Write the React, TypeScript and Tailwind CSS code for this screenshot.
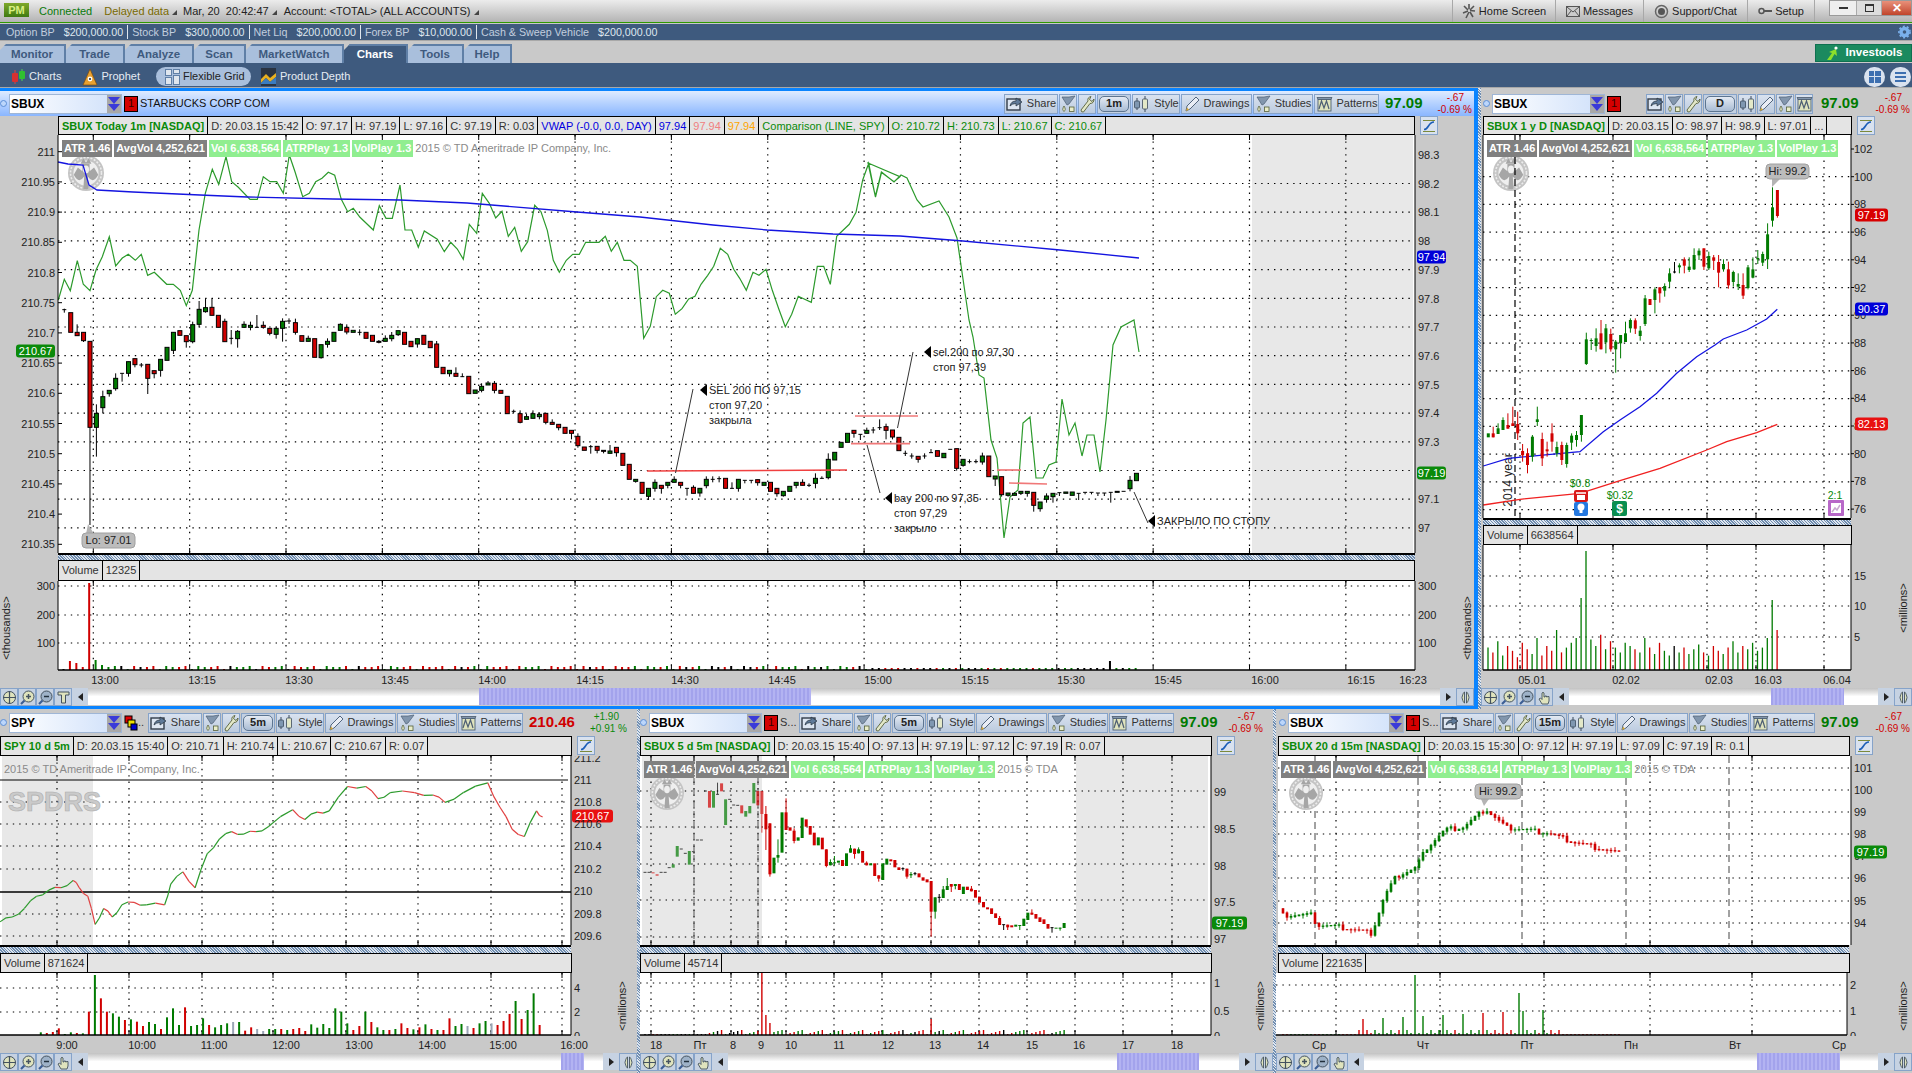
import React from 'react';

type Candle = [number, number, number, number?, number?]; // colour (1 up, 0 down, 2 doji), body top, body bottom, high, low

const UP = '#007a00';
const DOWN = '#d00000';
const K = 1.2194; // overview px to page px

const conv = (off: number) => (r: number[]): Candle => [r[0], off + r[1] / 3, off + r[2] / 3, r[3] !== undefined ? off + r[3] / 3 : undefined, r[4] !== undefined ? off + r[4] / 3 : undefined];

// main chart candles, read from the picture in three chunks
const mainA = [[2,539,541,536,548],[0,548,607],[0,607,617,583],[0,607,632,607,636],[0,634,892,634,1185],[1,850,892,823,980],[1,800,833,782,850],[1,781,791,781,800],[1,745,776,730,782],[2,730,731,730,755],[1,695,730,695,740],[0,686,704,686,712],[2,705,706,699,712],[0,703,745,703,792],[0,722,731,722,745],[1,688,721,688,740],[1,652,691],[1,607,661,607,672],[0,602,616],[0,617,635,617,653],[1,584,635,575,640],[1,538,583,513,592],[1,533,545,505,548],[0,532,556,505],[0,556,592],[0,574,635,566],[2,625,626,600,643],[1,604,626,600,653],[1,583,592,574],[1,586,592,575,601],[2,592,593,555],[0,586,592,574,596],[0,595,610,595,616],[1,595,613,590,626],[1,574,595,565,635],[2,573,574,565,582],[0,578,607,566,614],[0,617,634],[1,625,634,617],[0,626,682],[1,644,683,644,686],[1,634,643,625,653],[1,607,634],[1,583,601,580],[0,592,606,583,613],[1,601,607],[2,607,608,598,616],[0,607,625],[0,616,634],[0,634,637,630,640],[1,625,634,616],[1,616,626,606,634],[1,602,614,602,618]];
const mainB = [[0,592,628],[0,619,635],[1,611,627,611,638],[0,601,628],[0,619,638],[0,627,697,618],[0,697,716],[1,706,716,706,725],[0,715,724,697],[2,725,726,715],[0,724,776],[1,765,775],[1,754,766,745,772],[1,744,750,738],[0,745,766,738,775],[0,766,775],[0,784,836],[2,829,830,824,834],[0,836,862,826,865],[1,845,853,836],[1,836,850,826],[1,838,845,832,853],[0,835,862,835,868],[0,862,868,853],[0,868,878,868,886],[0,877,895],[0,886,895,886,913],[0,904,932,895,938],[0,936,946],[2,935,936,930,956],[0,934,946,934,955],[0,946,949,946,955],[1,948,955,930],[0,937,953,937,965],[0,955,991],[0,988,1033],[1,1033,1039,1033,1043],[0,1042,1075],[1,1060,1084,1060,1095],[1,1042,1060,1033,1070],[0,1051,1060,1051,1076],[1,1042,1051,1042,1060],[1,1033,1042,1024],[0,1042,1051,1042,1060],[2,1060,1061,1060,1082],[0,1057,1075,1051],[1,1060,1074,1060,1085],[1,1033,1052,1024,1060],[2,1033,1034,1024,1042],[2,1031,1032,1024,1042],[0,1030,1060],[2,1060,1061,1042],[1,1033,1060,1033,1070],[2,1036,1037,1036,1045],[2,1036,1037,1036,1045],[0,1034,1043,1034,1052],[1,1042,1051],[0,1042,1069],[0,1060,1076,1060,1085],[1,1069,1082,1069,1085],[1,1054,1069],[1,1042,1051,1042,1060],[0,1042,1051,1033],[2,1051,1052,1045,1056],[1,1030,1045,1015,1060],[2,1030,1031,1024],[1,973,1028,955,1033],[1,952,975],[1,922,937],[1,895,922],[0,886,895,886,908],[2,898,899,898,915],[1,886,895,878],[2,885,886,876,895],[2,878,879,853,885],[0,875,886,866,913],[0,885,906,885,913]];
const mainC = [[0,352,392],[2,400,401,392,408],[2,408,409,400,416],[0,409,418,409,428],[2,408,409,400,416],[2,398,399,387],[0,392,409],[1,400,413],[2,388,389],[0,386,445,386,452],[1,418,436,418,440],[2,425,426,418,430],[2,425,426,418,430],[1,408,426,398,434],[0,408,470],[1,468,477,468,498],[0,470,524,470,530],[1,519,526,519,530],[1,520,526,517],[1,514,520,514,525],[1,514,520,514,530],[0,517,556,517,575],[1,546,566,546,575],[1,528,538,520,548],[1,520,530,520,548],[2,518,519,518,528],[1,516,520],[1,516,526],[2,520,521,520,540],[2,517,518,517,523],[2,517,518,517,523],[2,519,520,519,528],[2,519,520,519,528],[2,517,518,517,548],[1,514,516],[2,514,515],[1,481,506,468,514],[1,460,482]];
const mainCandles: Candle[] = [...mainA.map(conv(130)), ...mainB.map(conv(135)), ...mainC.map(conv(320))];

const rightCandles: Candle[] = [[1,880,892],[0,880,892,860],[1,865,882,850],[1,840,870,832],[0,855,866,820],[0,850,858,800],[0,852,880,815,900],[0,933,946,912,965],[0,940,975,925,1000],[1,890,950,885,965],[1,838,846,800,858],[0,897,955,878,978],[0,928,934,905,950],[0,880,905,850,935],[1,921,940,905,950],[0,915,960,905,975],[1,915,972,908,983],[1,887,908,880,930],[1,885,900,873,920],[1,825,885,825,905],[1,598,672,578,675],[1,600,602,595,630],[1,595,618,565,635],[0,580,628,540],[1,565,607,552,640],[0,582,628,566,635],[1,605,628,600,698],[1,585,610,585,655],[1,580,606,545],[1,540,565,535,578],[0,541,566,535,582],[1,572,588,558,602],[1,475,552,465,558],[0,477,495],[1,448,480,442,520],[0,442,460,442,488],[1,438,452,430,470],[1,400,425,385,443],[2,396,397,366,400],[1,376,382,370,400],[0,358,377,352,400],[1,380,390,352,396],[1,345,388,325,390],[1,332,346,325,360],[0,325,380,325,390],[1,348,385,335,390],[0,352,362,345,390],[0,366,398,345,442],[1,372,388,358,395],[0,388,436,365,446],[1,396,426,392,440],[1,432,440,400,450],[0,435,467,400,477],[1,382,444,375,448],[1,388,413,352,415],[1,354,358,330,372],[1,342,368,335,378],[1,283,358,250,387],[1,202,242,142,260],[0,150,228,150,233]].map(conv(140));

const sbux5Candles: Candle[] = [[2,337,338],[2,337,338],[0,337,339],[0,343,347],[2,337,338],[2,337,338],[2,323,324],[1,313,323],[1,258,290],[2,267,268],[2,280,281],[1,273,314],[2,275,276],[2,240,241],[2,240,241],[2,93,94],[0,93,143],[1,93,143],[2,103,104,68],[0,70,94],[1,118,195],[2,118,119],[2,135,136],[2,136,137],[0,136,160],[1,153,170],[1,138,160],[1,69,130],[0,93,136],[0,93,162,93,218],[0,162,208,138,270],[0,190,343,190,350],[1,293,340],[1,285,293,238,308],[1,157,278],[0,157,210,115],[0,202,212],[0,212,243,205,250],[1,232,242],[1,173,234],[0,178,200],[0,198,224],[0,218,256],[1,232,256],[0,233,268],[0,268,318,268,322],[1,306,316,298],[1,307,309,288,316],[1,302,308],[0,300,318],[1,280,318],[1,265,278,255],[0,266,282,266,296],[1,268,280,262],[0,273,308],[0,308,316,304],[1,310,316],[0,310,348],[0,346,356,346,365],[1,310,360],[1,296,314],[0,298,304],[0,300,322],[0,322,330],[2,326,327,322,332],[0,326,350,326,356],[1,342,346,336,354],[2,341,342,336,346],[0,340,352],[0,352,362],[0,358,367],[0,363,455,363,530],[1,412,455,412,476],[2,412,413,402,428],[1,388,414,378],[1,378,390,354],[0,372,380,372,396],[1,372,378,372,388],[0,372,390],[1,380,402],[0,380,390],[0,386,394,378],[0,390,413],[0,410,428],[0,426,442],[0,442,448],[0,445,462],[0,460,474],[0,474,495,468],[2,494,495,494,510],[0,494,502,494,510],[0,496,502],[1,494,500],[1,495,497,495,510],[1,476,498],[1,458,480],[0,458,464,448],[0,462,476],[0,472,486],[0,478,492],[0,492,506],[2,503,504,503,518],[1,503,506],[1,503,506,503,512],[1,489,504]].map(conv(760));

// 20 day chart: coarse path from the picture, the bars follow it
const sbux20Path: [number, number][] = [[1050,750],[1075,750],[1080,758],[1100,760],[1125,765],[1135,735],[1145,718],[1160,712],[1170,695],[1185,680],[1200,678],[1218,663],[1235,678],[1250,680],[1270,683],[1290,690],[1310,695],[1330,700]];
const pathY = (p: [number, number][], x: number) => {
  for (let i = 1; i < p.length; i++) if (x <= p[i][0]) return p[i - 1][1] + ((p[i][1] - p[i - 1][1]) * (x - p[i - 1][0])) / (p[i][0] - p[i - 1][0]);
  return p[p.length - 1][1];
};
const sbux20Candles: Candle[] = Array.from({ length: 85 }, (_, i) => {
  const x = 1052 + i * 3.28;
  const prev = pathY(sbux20Path, x - 3.28) * K + (((i - 1) * 13) % 7 - 3) * 0.7;
  const cur = pathY(sbux20Path, x) * K + ((i * 13) % 7 - 3) * 0.7;
  const t = Math.min(prev, cur);
  const b = Math.max(prev, cur) + 1;
  return [cur < prev ? 1 : 0, t, b, t - (i * 5) % 4, b + (i * 3) % 4] as Candle;
});

const comparison: [number, number][] = [
  ...[[175,510],[193,448],[211,482],[232,392],[250,463],[270,482],[288,420],[307,380],[328,320],[347,408],[367,384],[385,373],[406,391],[424,373],[443,436],[463,427],[500,463],[520,463],[541,481],[559,527],[577,481],[597,300],[616,190],[637,118],[656,163],[678,80],[695,155],[715,172],[750,208],[772,208],[790,140],[810,155],[830,155],[850,190],[868,75],[885,125],[908,200],[928,190],[947,155],[966,145],[985,127],[1004,136],[1024,208],[1043,245],[1060,235],[1080,262],[1120,300],[1138,227],[1158,265],[1177,265]].map(([x, y]) => [x / 3, 130 + y / 3] as [number, number]),
  ...[[0,150],[15,285],[35,285],[55,337],[73,288],[112,313],[133,350],[152,322],[172,342],[190,373],[208,268],[230,295],[247,175],[268,205],[287,249],[306,229],[325,304],[344,277],[364,349],[383,320],[404,211],[423,230],[442,286],[460,376],[478,412],[499,376],[518,358],[538,358],[557,322],[597,322],[616,304],[634,349],[652,322],[672,376],[691,376],[712,394],[731,610],[751,574],[769,485],[788,466],[808,475],[826,538],[846,521],[866,492],[885,484],[903,448],[923,421],[941,394],[961,340],[983,358],[1001,403],[1019,430],[1039,466],[1059,412],[1077,421],[1098,403],[1117,466],[1136,521],[1156,575],[1175,538],[1195,484],[1234,502],[1252,394],[1271,394],[1291,448],[1310,304],[1330,285],[1348,268],[1368,232],[1388,135],[1406,85],[1426,184],[1444,112],[1482,140],[1500,125]].map(([x, y]) => [400 + x / 3, 135 + y / 3] as [number, number]),
  [868,163],[875.5,197],[881.6,172],[894,182],[901,175],[907,178],[917,200],[923,207],[939,201],[949,217],[957,238],[969,320],[973,337],[979,375],[984,378],[991,440],[997,458],[1004,538],[1010,497],[1018,490],[1023,423],[1030,417],[1036,478],[1043,478],[1049,465],[1056,462],[1062,399],[1069,435],[1075,423],[1082,456],[1087,435],[1094,435],[1100,472],[1106,420],[1113,345],[1121,327],[1134,320],[1139,352],
];
const vwap: [number, number][] = [[58,162],[68,164],[83,165],[89,185],[97,190],[133,192],[200,195],[247,197],[333,199],[400,200],[467,203],[577,212],[640,217],[713,225],[767,230],[833,234],[900,236],[963,241],[1060,250],[1139,258]];
const spyBase: [number, number][] = [[0,756],[10,752],[20,745],[30,735],[40,730],[50,728],[60,722],[65,728],[72,735],[78,758],[85,745],[92,752],[100,742],[110,740],[120,742],[135,742],[140,725],[150,715],[160,728],[170,700],[180,688],[190,682],[200,684],[210,682],[220,678],[240,664],[250,672],[260,666],[270,665],[285,645],[300,645],[310,655],[320,650],[340,650],[355,652],[365,658],[380,650],[400,642],[410,662],[420,680],[430,686],[440,665],[445,670]];
// the real line wiggles between those points
const spyLine: [number, number][] = spyBase.flatMap(([x, y], i): [number, number][] => {
  const next = spyBase[i + 1];
  const first: [number, number] = [x * K, y * K];
  if (!next) return [first];
  return [first, [((x + next[0]) / 2) * K, ((y + next[1]) / 2) * K + (i % 2 ? 1.6 : -1.6)]];
});

const spyVol: [number, number][] = [[1,217],[0,219],[0,216],[0,205],[1,222],[1,217],[0,219],[1,220],[0,155],[1,45],[0,115],[0,155],[1,160],[1,170],[0,180],[1,178],[0,185],[0,198],[1,186],[1,192],[0,207],[1,172],[1,145],[1,195],[0,142],[1,198],[1,195],[1,175],[0,195],[1,202],[1,195],[1,190],[3,186],[1,186],[0,212],[0,202],[3,207],[3,213],[1,207],[1,207],[0,207],[1,210],[0,207],[0,204],[0,213],[1,193],[1,203],[1,192],[1,204],[1,145],[1,155],[1,190],[0,210],[0,198],[1,155],[0,186],[1,202],[1,210],[0,210],[1,207],[0,190],[0,204],[1,208],[0,202],[1,193],[0,207],[1,210],[0,210],[0,175],[1,198],[1,192],[3,198],[0,204],[1,190],[1,183],[3,190],[0,195],[0,183],[0,162],[1,123],[0,177],[1,150],[1,100],[0,195]];
const rightVol = [28,22,36,18,30,24,16,34,26,20,40,18,30,24,50,22,28,34,40,72,119,38,30,44,26,36,28,22,34,30,26,22,40,28,20,34,24,18,30,22,28,20,26,32,22,18,30,24,20,28,36,22,30,26,34,24,28,40,70,50];

const tone = (c: number) => (c === 1 ? UP : c === 0 ? DOWN : c === 3 ? '#9aa5b5' : '#000000');
const poly = (p: [number, number][]) => p.map(([x, y]) => `${x.toFixed(1)},${y.toFixed(1)}`).join(' ');

const Candles = ({ data, x0, step, w, outlined, fadeUntil }: { data: Candle[]; x0: number; step: number; w: number; outlined?: boolean; fadeUntil?: number }) => (
  <g>
    {data.map((c, i) => {
      const x = x0 + i * step;
      const [col, top, bot, hi, lo] = c;
      const fill = tone(col);
      const wick = outlined || col === 2 ? '#000000' : fill;
      const o = fadeUntil !== undefined && x < fadeUntil ? 0.7 : 1;
      const doji = col === 2;
      return (
        <g key={i} opacity={o}>
          {(hi !== undefined || lo !== undefined) && <line x1={x} x2={x} y1={hi ?? top} y2={lo ?? bot} stroke={wick} strokeWidth={1} />}
          {doji ? (
            <line x1={x - w / 2} x2={x + w / 2} y1={top} y2={top} stroke="#000000" strokeWidth={1} />
          ) : (
            <rect x={x - w / 2} y={top} width={w} height={Math.max(bot - top, 1)} fill={fill} stroke={outlined ? '#000000' : 'none'} strokeWidth={outlined ? 1 : 0} />
          )}
        </g>
      );
    })}
  </g>
);

const Grid = ({ ys, xs, x1, x2, y1, y2, solid }: { ys: number[]; xs: number[]; x1: number; x2: number; y1: number; y2: number; solid?: number[] }) => (
  <g stroke="#000000">
    {ys.map((y) => (
      <line key={y} x1={x1} x2={x2} y1={y} y2={y} strokeWidth={1.2} strokeDasharray="1.4 5" />
    ))}
    {xs.map((x) => (
      <g key={x}>
        <line x1={x} x2={x} y1={y1} y2={y2} strokeWidth={1.2} strokeDasharray="1.4 5" />
        <line x1={x} x2={x} y1={y1} y2={y1 + 5} strokeWidth={1} />
        <line x1={x} x2={x} y1={y2 - 5} y2={y2} strokeWidth={1} />
      </g>
    ))}
    {(solid ?? []).map((y) => (
      <line key={y} x1={x1} x2={x2} y1={y} y2={y} strokeWidth={1} />
    ))}
  </g>
);

const Lbl = ({ x, y, t, end, mid, fill = '#222222' }: { x: number; y: number; t: string; end?: boolean; mid?: boolean; fill?: string }) => (
  <text x={x} y={y + 4} fontSize={11} fill={fill} textAnchor={end ? 'end' : mid ? 'middle' : 'start'}>
    {t}
  </text>
);

const Vert = ({ x, y, t, size = 11 }: { x: number; y: number; t: string; size?: number }) => (
  <text transform={`rotate(-90 ${x} ${y})`} x={x} y={y + 4} fontSize={size} fill="#222222" textAnchor="middle">
    {t}
  </text>
);

const Badge = ({ x, y, w, t, bg }: { x: number; y: number; w: number; t: string; bg: string }) => (
  <g>
    <rect x={x} y={y - 6.5} width={w} height={13} rx={3} fill={bg} />
    <text x={x + w / 2} y={y + 4} fontSize={11} fill="#ffffff" textAnchor="middle">
      {t}
    </text>
  </g>
);

const Bubble = ({ x, y, w, t, px, py, below }: { x: number; y: number; w: number; t: string; px: number; py: number; below?: boolean }) => (
  <g>
    <polygon points={below ? `${x + 6},${y + 15} ${x + 14},${y + 15} ${px},${py}` : `${x + 4},${y + 1} ${x + 12},${y + 1} ${px},${py}`} fill="#b4b4b4" />
    <rect x={x} y={y} width={w} height={15} rx={4} fill="#bcbcbc" stroke="#a0a0a0" />
    <text x={x + w / 2} y={y + 11} fontSize={11} fill="#222222" textAnchor="middle">
      {t}
    </text>
  </g>
);

const Siren = ({ cx, cy, r }: { cx: number; cy: number; r: number }) => (
  <g>
    <circle cx={cx} cy={cy} r={r} fill="#c4c4c4" />
    <circle cx={cx} cy={cy} r={r * 0.86} fill="none" stroke="#ececec" strokeWidth={1.6} strokeDasharray="2 1.5" />
    <circle cx={cx} cy={cy} r={r * 0.7} fill="#efefef" />
    <path d={`M${cx - r * 0.68} ${cy + r * 0.1} Q${cx - r * 0.4} ${cy + r * 0.65} ${cx - r * 0.1} ${cy + r * 0.2} L${cx - r * 0.15} ${cy + r * 0.9} L${cx + r * 0.15} ${cy + r * 0.9} L${cx + r * 0.1} ${cy + r * 0.2} Q${cx + r * 0.4} ${cy + r * 0.65} ${cx + r * 0.68} ${cy + r * 0.1} L${cx + r * 0.45} ${cy - r * 0.3} L${cx + r * 0.2} ${cy - r * 0.1} L${cx + r * 0.2} ${cy - r * 0.5} L${cx - r * 0.2} ${cy - r * 0.5} L${cx - r * 0.2} ${cy - r * 0.1} L${cx - r * 0.45} ${cy - r * 0.3} Z`} fill="#a6a6a6" />
    <ellipse cx={cx} cy={cy - r * 0.2} rx={r * 0.17} ry={r * 0.22} fill="#efefef" />
    <path d={`M${cx - r * 0.3} ${cy - r * 0.52} L${cx - r * 0.15} ${cy - r * 0.8} L${cx} ${cy - r * 0.58} L${cx + r * 0.15} ${cy - r * 0.8} L${cx + r * 0.3} ${cy - r * 0.52} Z`} fill="#a6a6a6" />
  </g>
);

const Plot = ({ x, y, w, h, children }: { x: number; y: number; w: number; h: number; children: React.ReactNode }) => (
  <svg width={w} height={h} viewBox={`${x} ${y} ${w} ${h}`} className="block shrink-0">
    {children}
  </svg>
);

// little toolbar drawings
const Ico = ({ n }: { n: string }) => {
  const s = 'shrink-0';
  if (n === 'share')
    return (
      <svg width="17" height="15" viewBox="0 0 17 15" className={s}>
        <rect x="1" y="3" width="13" height="11" fill="#dde6f2" stroke="#333d4a" strokeWidth="1.4" />
        <path d="M4 10 Q5 5 10 5 V2 L16 6 L10 10 V7.5 Q6 7.5 4 10Z" fill="#5f7a99" stroke="#27323e" strokeWidth=".7" />
      </svg>
    );
  if (n === 'flask')
    return (
      <svg width="16" height="18" viewBox="0 0 16 18" className={s}>
        <path d="M2 2 L9 2 L15 1 L9 9 L7 10 Z" fill="#8296ad" stroke="#4d5f74" strokeWidth=".7" />
        <path d="M4 11 Q1.5 15 4 16.5 Q6.5 15 4 11Z" fill="#e9edc9" stroke="#56603a" strokeWidth=".8" />
        <rect x="9.5" y="12" width="4.5" height="4.5" fill="#e9edc9" stroke="#56603a" strokeWidth=".8" />
      </svg>
    );
  if (n === 'wrench')
    return (
      <svg width="16" height="18" viewBox="0 0 16 18" className={s}>
        <path d="M2 15 L9 6 Q8 2.5 12 1.5 L10.5 4.5 L13 6.5 L15 4 Q15 8.5 11 8.5 L4.5 17 Q2 17.5 2 15Z" fill="#e3e8c8" stroke="#56603a" strokeWidth=".9" />
      </svg>
    );
  if (n === 'style')
    return (
      <svg width="17" height="18" viewBox="0 0 17 18" className={s}>
        <path d="M4 3 V15 M12 1 V17" stroke="#3b4a5c" strokeWidth="1" />
        <rect x="1.5" y="6" width="5" height="7" rx="1" fill="#7f97b1" stroke="#3b4a5c" strokeWidth=".8" />
        <rect x="9.5" y="4" width="5" height="10" rx="1" fill="#e3e8c8" stroke="#3b4a5c" strokeWidth=".8" />
      </svg>
    );
  if (n === 'pencil')
    return (
      <svg width="16" height="18" viewBox="0 0 16 18" className={s}>
        <path d="M2 16 L3 11 L12 2 L15 5 L6 14 Z" fill="#e9edf5" stroke="#51657d" strokeWidth="1" />
        <path d="M2 16 L3 12.5 L5 14.8Z" fill="#d6a733" />
      </svg>
    );
  return (
    <svg width="17" height="16" viewBox="0 0 17 16" className={s}>
      <path d="M1 1.5 H16 L14.5 4 H2.5Z" fill="#8296ad" stroke="#3b4a5c" strokeWidth=".7" />
      <rect x="2" y="3.5" width="13" height="11.5" fill="#dfe3bd" stroke="#4d5f74" strokeWidth=".9" />
      <path d="M3 13 L5.5 5 L8 12 L10.5 5 L13 13" fill="none" stroke="#4d5f74" strokeWidth="1.2" />
    </svg>
  );
};

const ToolBtn = ({ n, label, cls }: { n: string; label?: string; cls: string }) => (
  <div className={`flex h-[20px] items-center justify-center gap-[4px] border border-[#86a3c9] bg-linear-to-b from-[#d9e2ef] to-[#bccbdf] text-[#333] ${cls}`}>
    <Ico n={n} />
    {label && <span>{label}</span>}
  </div>
);

const TfBtn = ({ t, cls }: { t: string; cls: string }) => (
  <div className={`flex h-[20px] items-center border border-[#86a3c9] bg-[#c3d0e2] px-[1px] ${cls}`}>
    <div className="flex h-[16px] w-full items-center justify-center rounded-[5px] border border-[#5d7590] bg-linear-to-b from-[#e4eaf3] to-[#a9bcd4] font-bold text-[#222]">{t}</div>
  </div>
);

const SymbolBox = ({ s, cls }: { s: string; cls: string }) => (
  <div className={`flex h-[20px] items-stretch border border-[#9fb6d6] bg-linear-to-r from-white to-[#cfe0fa] ${cls}`}>
    <span className="flex-1 pl-[1px] text-[12px] leading-[18px] font-bold text-black">{s}</span>
    <div className="flex w-[14px] flex-col items-center justify-center bg-[#a8a8a8]">
      <span className="h-0 w-0 border-x-[6px] border-t-[7px] border-x-transparent border-t-[#3a3ad8]" />
      <span className="h-0 w-0 border-x-[6px] border-t-[7px] border-x-transparent border-t-[#3a3ad8]" />
    </div>
  </div>
);

const RedBox = () => <div className="flex h-[16px] w-[14px] shrink-0 items-center justify-center border border-black bg-[#d40000] text-[11px] text-[#300]">1</div>;

const Dot = () => <span className="h-[7px] w-[7px] shrink-0 rounded-full border border-[#5d8fd6] bg-[#bcd6fb]" />;

const Change = ({ a, b, cls }: { a: string; b: string; cls: string }) => (
  <div className={`flex flex-1 flex-col items-end pr-[2px] text-[10px] leading-[12px] ${cls}`}>
    <span className="pr-[8px]">{a}</span>
    <span>{b}</span>
  </div>
);

type Cell = { t: string; c?: string };

const InfoRow = ({ cells, ml, w, tall }: { cells: Cell[]; ml: string; w: string; tall?: boolean }) => (
  <div className={`flex shrink-0 items-stretch ${tall ? 'h-[20px]' : 'h-[19px]'}`}>
    <div className={`flex border border-black bg-[#e4e4e4] text-[11px] leading-[18px] ${ml} ${w}`}>
      {cells.map((c, i) => (
        <span key={i} className={`whitespace-pre border-r border-black px-[3px] ${c.c ?? 'text-[#333]'}`}>
          {c.t}
        </span>
      ))}
    </div>
    <div className="ml-[5px] flex h-[19px] w-[18px] items-center justify-center border border-[#86a3c9] bg-[#d9e2ef]">
      <svg width="14" height="14" viewBox="0 0 14 14">
        <path d="M1 1.5 H13 M1 12.5 H13" stroke="#7b8a3c" strokeWidth="1" />
        <path d="M2 10.5 C7 10.5 6 3 12 3" fill="none" stroke="#1c5fb8" strokeWidth="1.6" />
      </svg>
    </div>
  </div>
);

const VolRow = ({ v, ml, w, tall }: { v: string; ml: string; w: string; tall?: boolean }) => (
  <div className={`flex shrink-0 border border-black bg-[#e4e4e4] text-[11px] leading-[19px] text-[#333] ${tall ? 'h-[21px]' : 'h-[20px]'} ${ml} ${w}`}>
    <span className="border-r border-black px-[3px]">Volume</span>
    <span className="border-r border-black px-[3px]">{v}</span>
  </div>
);

const Splitter = ({ w, ml, h }: { w: string; ml: string; h: string }) => (
  <div className={`shrink-0 border-t-2 border-black bg-[repeating-linear-gradient(45deg,#6f8db0_0_1px,#dfe6ef_1px_2px)] ${w} ${ml} ${h}`} />
);

const Thumb = () => <div className="h-full bg-[repeating-linear-gradient(90deg,#a3a3ec_0_2px,#b3b3f2_2px_4px)]" />;

const ScrollIcon = ({ n }: { n: string }) => (
  <div className="flex h-[18px] w-[18px] shrink-0 items-center justify-center border border-[#86a3c9] bg-[#c6d2e2]">
    <svg width="15" height="15" viewBox="0 0 15 15">
      {n === 'cross' && (
        <g>
          <circle cx="7.5" cy="7.5" r="6" fill="#dfe3bd" stroke="#44525f" />
          <path d="M7.5 1 V14 M1 7.5 H14" stroke="#44525f" strokeWidth="1.2" />
        </g>
      )}
      {n === 'plus' && (
        <g>
          <circle cx="8.5" cy="6.5" r="5.5" fill="#dfe3bd" stroke="#44525f" />
          <path d="M6 6.5 H11 M8.5 4 V9" stroke="#44525f" strokeWidth="1.5" />
          <path d="M4.5 10.5 L1 14" stroke="#3c5e94" strokeWidth="2.2" />
        </g>
      )}
      {n === 'minus' && (
        <g>
          <circle cx="8.5" cy="6.5" r="5.5" fill="#9eb2c8" stroke="#44525f" />
          <path d="M6 6.5 H11" stroke="#22303d" strokeWidth="1.5" />
          <path d="M4.5 10.5 L1 14" stroke="#3c5e94" strokeWidth="2.2" />
        </g>
      )}
      {n === 'T' && <path d="M2 2 H13 V5 H9.5 V13 H5.5 V5 H2Z" fill="#dfe3bd" stroke="#44525f" />}
      {n === 'hand' && <path d="M5 14 L2 9 L3.5 8 L5 9.5 V3 Q6 1.5 7 3 V7 H8 V6 H9.5 V7 H10.5 V6.5 H12 V11 L11 14Z" fill="#dfe3bd" stroke="#44525f" strokeWidth=".9" />}
      {n === 'arrow' && <path d="M4 7.5 C5 3 6 2 6.5 2 V13 C6 13 5 12 4 7.5Z M11 7.5 C10 3 9 2 8.5 2 V13 C9 13 10 12 11 7.5Z" fill="#dfe3bd" stroke="#44525f" strokeWidth=".9" />}
    </svg>
  </div>
);

const ScrollRow = ({ last, left, width }: { last: string; left: number; width: number }) => (
  <div className="flex h-[17px] shrink-0 items-stretch">
    <ScrollIcon n="cross" />
    <ScrollIcon n="plus" />
    <ScrollIcon n="minus" />
    <ScrollIcon n={last} />
    <div className="flex w-[16px] shrink-0 items-center justify-center bg-[#c6d2e2]">
      <span className="h-0 w-0 border-y-[4px] border-r-[5px] border-y-transparent border-r-[#222]" />
    </div>
    <div className="flex-1 bg-linear-to-b from-[#c2c2c2] via-white to-white">
      <div className="h-full" style={{ marginLeft: left, width }}>
        <Thumb />
      </div>
    </div>
    <div className="flex w-[16px] shrink-0 items-center justify-center bg-[#c6d2e2]">
      <span className="h-0 w-0 border-y-[4px] border-l-[5px] border-y-transparent border-l-[#222]" />
    </div>
    <ScrollIcon n="arrow" />
  </div>
);

const Chips = ({ vol = '6,638,564', note, cls }: { vol?: string; note?: string; cls: string }) => (
  <div className={`absolute top-[5px] flex gap-[2px] text-[11px] leading-[17px] font-bold whitespace-nowrap text-white ${cls}`}>
    <span className="bg-[#808080] px-[2px]">ATR 1.46</span>
    <span className="bg-[#808080] px-[2px]">AvgVol 4,252,621</span>
    <span className="bg-[#90ee90] px-[2px]">Vol {vol}</span>
    <span className="bg-[#90ee90] px-[2px]">ATRPlay 1.3</span>
    <span className="bg-[#90ee90] px-[2px]">VolPlay 1.3</span>
    {note && <span className="font-normal text-[#8a8a8a]">{note}</span>}
  </div>
);

const Note = ({ x, y, lines }: { x: number; y: number; lines: string[] }) => (
  <g>
    <polygon points={`${x - 9},${y} ${x - 2},${y - 6} ${x - 2},${y + 6}`} fill="#000000" />
    {lines.map((t, i) => (
      <text key={t} x={x} y={y + 4 + i * 15} fontSize={11} fill="#222222">
        {t}
      </text>
    ))}
  </g>
);

const seg = (a: [number, number], b: [number, number], c: string, w = 1, key?: string) => <line key={key} x1={a[0]} y1={a[1]} x2={b[0]} y2={b[1]} stroke={c} strokeWidth={w} />;

const MainChart = () => {
  const ys = Array.from({ length: 13 }, (_, i) => 183.5 + i * 28.7);
  const xs = Array.from({ length: 14 }, (_, i) => 93.3 + i * 96.35);
  const left = ['211', '210.95', '210.9', '210.85', '210.8', '210.75', '210.7', '210.65', '210.6', '210.55', '210.5', '210.45', '210.4', '210.35'];
  const right = ['98.3', '98.2', '98.1', '98', '97.9', '97.8', '97.7', '97.6', '97.5', '97.4', '97.3', '97.2', '97.1', '97'];
  return (
    <div className="relative h-[418px] shrink-0">
      <Plot x={0} y={135} w={1474} h={418}>
        <rect x={0} y={135} width={1474} height={418} fill="#c9c9c9" />
        <rect x={58} y={135} width={1357} height={418} fill="#ffffff" />
        <rect x={1252} y={135} width={161} height={418} fill="#e8e8e8" />
        <Grid ys={ys} xs={xs} x1={58} x2={1413} y1={135} y2={553} />
        <Siren cx={86} cy={173} r={18} />
        <polyline points={poly(comparison)} fill="none" stroke="#2c9a2c" strokeWidth={1.2} />
        <polyline points={poly(vwap)} fill="none" stroke="#1414e0" strokeWidth={1.3} />
        <Candles data={mainCandles} x0={64.3} step={6.42} w={4} outlined />
        {seg([647, 471], [847, 470], '#f04040', 1.5)}
        {seg([855, 416], [918, 416], '#f07878', 1.7)}
        {seg([851, 443.7], [910, 443.7], '#f07878', 1.7)}
        {seg([997, 470], [1021, 470], '#f07878', 1.7)}
        {seg([1009, 483], [1047, 484], '#f07878', 1.7)}
        {seg([693, 389], [675.5, 473], '#333333')}
        {seg([913, 352], [897.5, 428], '#333333')}
        {seg([867, 445], [880, 493], '#333333')}
        {seg([1134, 492], [1148, 523], '#333333')}
        <Note x={709} y={390} lines={['SEL 200 ПО 97,15', 'стоп 97,20', 'закрыла']} />
        <Note x={933} y={352} lines={['sel 200 по 97,30', 'стоп 97,39']} />
        <Note x={894} y={498} lines={['bay 200 по 97,35', 'стоп 97,29', 'закрыло']} />
        <Note x={1157} y={521} lines={['ЗАКРЫЛО ПО СТОПУ']} />
        <Bubble x={82} y={533} w={53} t="Lo: 97.01" px={88} py={524} />
        <line x1={58} x2={58} y1={135} y2={553} stroke="#000000" />
        <line x1={1415} x2={1415} y1={135} y2={553} stroke="#000000" />
        {left.map((t, i) => (
          <g key={t}>
            <Lbl x={55} y={151.7 + i * 30.2} t={t} end />
            <line x1={58} x2={62} y1={151.7 + i * 30.2} y2={151.7 + i * 30.2} stroke="#000000" />
          </g>
        ))}
        {right.map((t, i) => (
          <Lbl key={t} x={1418} y={155 + i * 28.7} t={t} />
        ))}
        <Badge x={16} y={351} w={39} t="210.67" bg="#0a8a0a" />
        <Badge x={1417} y={257} w={29} t="97.94" bg="#0000d8" />
        <Badge x={1417} y={473} w={29} t="97.19" bg="#0a8a0a" />
      </Plot>
      <Chips cls="left-[62px]" note="2015 © TD Ameritrade IP Company, Inc." />
    </div>
  );
};

const MainVolume = () => {
  const ticks = [['13:00', 105], ['13:15', 202], ['13:30', 299], ['13:45', 395], ['14:00', 492], ['14:15', 590], ['14:30', 685], ['14:45', 782], ['15:00', 878], ['15:15', 975], ['15:30', 1071], ['15:45', 1168], ['16:00', 1265], ['16:15', 1361], ['16:23', 1413]] as [string, number][];
  const xs = Array.from({ length: 14 }, (_, i) => 93.3 + i * 96.35);
  const heights = (i: number) => {
    const first: Record<number, number> = { 1: 9, 2: 7, 3: 3, 4: 87, 5: 10, 6: 5, 7: 3, 8: 4 };
    if (first[i]) return first[i];
    if (i === 163) return 9;
    return i > 125 ? 2 + (i * 7) % 7 : 1 + (i * i * 3 + i * 5) % 5;
  };
  return (
    <Plot x={0} y={581} w={1474} h={107}>
      <rect x={0} y={581} width={1474} height={107} fill="#c9c9c9" />
      <rect x={58} y={581} width={1357} height={89} fill="#ffffff" />
      <Grid ys={[586, 615, 643]} xs={xs} x1={58} x2={1413} y1={581} y2={670} />
      {mainCandles.map((c, i) => (
        <line key={i} x1={63.5 + i * 6.42} x2={63.5 + i * 6.42} y1={670} y2={670 - heights(i)} stroke={tone(c[0])} strokeWidth={2} />
      ))}
      <line x1={58} x2={1415} y1={670} y2={670} stroke="#000000" strokeWidth={1.5} />
      <line x1={58} x2={58} y1={581} y2={670} stroke="#000000" />
      <line x1={1415} x2={1415} y1={581} y2={670} stroke="#000000" />
      {[['300', 586], ['200', 615], ['100', 643]].map(([t, y]) => (
        <g key={t}>
          <Lbl x={55} y={y as number} t={t as string} end />
          <Lbl x={1418} y={y as number} t={t as string} />
        </g>
      ))}
      <Vert x={6} y={628} t="<thousands>" />
      <Vert x={1467} y={628} t="<thousands>" />
      {ticks.map(([t, x]) => (
        <Lbl key={t} x={x} y={680} t={t} mid />
      ))}
    </Plot>
  );
};

const RightChart = () => {
  const X = (v: number) => 1480 + v / 3;
  const Y = (v: number) => 140 + v / 3;
  const toP = (p: number[][]) => p.map(([a, b]) => [X(a), Y(b)] as [number, number]);
  const labels = ['102', '100', '98', '96', '94', '92', '90', '88', '86', '84', '82', '80', '78', '76'];
  return (
    <div className="relative h-[383px] shrink-0">
      <Plot x={1481} y={135} w={431} h={383}>
        <rect x={1481} y={135} width={431} height={383} fill="#c9c9c9" />
        <rect x={1483} y={135} width={368} height={383} fill="#ffffff" />
        <Grid ys={Array.from({ length: 13 }, (_, i) => 176.7 + i * 27.75)} xs={[1520, 1613, 1707, 1756, 1824]} x1={1483} x2={1851} y1={135} y2={518} />
        <Siren cx={1511} cy={173} r={18} />
        <line x1={1515} x2={1515} y1={135} y2={518} stroke="#000000" strokeWidth={1.2} strokeDasharray="7 4" />
        <Vert x={1508} y={480} t="2014 year" size={12} />
        <polyline points={poly(toP([[10,978],[85,955],[300,935],[370,875],[420,840],[480,800],[530,760],[590,700],[650,650],[705,615],[730,597],[800,570],[860,537],[892,508]]))} fill="none" stroke="#1414e0" strokeWidth={1.3} />
        <polyline points={poly(toP([[10,1095],[120,1078],[300,1060],[420,1022],[540,985],[680,930],[740,905],[830,878],[892,853]]))} fill="none" stroke="#f02020" strokeWidth={1.3} />
        <Candles data={rightCandles} x0={1488.3} step={4.9} w={3} />
        <Bubble x={1766} y={164} w={43} t="Hi: 99.2" px={1772} py={187} below />
        <text x={1580} y={487} fontSize={10.5} fill="#0a8a0a" textAnchor="middle">$0.8</text>
        <text x={1620} y={499} fontSize={10.5} fill="#0a8a0a" textAnchor="middle">$0.32</text>
        <text x={1835} y={499} fontSize={10.5} fill="#0a8a0a" textAnchor="middle">2:1</text>
        <rect x={1574} y={490} width={14} height={12} rx={2} fill="#d81818" />
        <rect x={1577} y={495} width={8} height={5} fill="#ffffff" />
        <path d="M1576 493 H1586" stroke="#ffffff" strokeWidth={1.5} />
        <rect x={1574} y={502} width={14} height={14} rx={2} fill="#2478e0" />
        <circle cx={1581} cy={507} r={3.5} fill="#ffffff" />
        <rect x={1579.5} y={510} width={3} height={3} fill="#ffffff" />
        <rect x={1612} y={501} width={15} height={15} rx={2} fill="#0a8f50" />
        <text x={1619.5} y={513} fontSize={12} fontWeight="bold" fill="#ffffff" textAnchor="middle">$</text>
        <rect x={1828} y={500} width={16} height={16} rx={1} fill="#b868c8" />
        <rect x={1831} y={503} width={10} height={10} fill="#ffffff" />
        <path d="M1832 512 L1835 508 L1837 510 L1840 505" fill="none" stroke="#c8a8d0" strokeWidth={1.5} />
        <line x1={1483} x2={1483} y1={135} y2={518} stroke="#000000" />
        <line x1={1851} x2={1851} y1={135} y2={518} stroke="#000000" />
        {labels.map((t, i) => (
          <g key={t}>
            <Lbl x={1854} y={149 + i * 27.7} t={t} />
            <line x1={1851} x2={1854} y1={149 + i * 27.7} y2={149 + i * 27.7} stroke="#000000" />
          </g>
        ))}
        <Badge x={1855} y={215} w={33} t="97.19" bg="#d80000" />
        <Badge x={1855} y={309} w={33} t="90.37" bg="#0000d8" />
        <Badge x={1855} y={424} w={33} t="82.13" bg="#e81010" />
      </Plot>
      <Chips cls="left-[6px]" />
    </div>
  );
};

const RightVolume = () => (
  <Plot x={1481} y={545} w={431} h={143}>
    <rect x={1481} y={545} width={431} height={143} fill="#c9c9c9" />
    <rect x={1483} y={545} width={368} height={125} fill="#ffffff" />
    <Grid ys={[576, 606, 637]} xs={[1520, 1613, 1707, 1756, 1824]} x1={1483} x2={1851} y1={545} y2={670} />
    {rightCandles.map((c, i) => (
      <line key={i} x1={1488 + i * 4.9} x2={1488 + i * 4.9} y1={670} y2={670 - (rightVol[i] > 60 ? rightVol[i] : rightVol[i] * 0.8)} stroke={tone(c[0])} strokeWidth={1.3} />
    ))}
    <line x1={1483} x2={1851} y1={670} y2={670} stroke="#000000" strokeWidth={1.5} />
    <line x1={1483} x2={1483} y1={545} y2={670} stroke="#000000" />
    <line x1={1851} x2={1851} y1={545} y2={670} stroke="#000000" />
    <Lbl x={1854} y={576} t="15" />
    <Lbl x={1854} y={606} t="10" />
    <Lbl x={1854} y={637} t="5" />
    <Vert x={1903} y={608} t="<millions>" />
    {([['05.01', 1532], ['02.02', 1626], ['02.03', 1719], ['16.03', 1768], ['06.04', 1837]] as [string, number][]).map(([t, x]) => (
      <Lbl key={t} x={x} y={680} t={t} mid />
    ))}
  </Plot>
);

const SmallFrame = ({ x, w, gray, xs, ys, labels, children, solid }: { x: number; w: number; gray: [number, number][]; xs: number[]; ys: number[]; labels: [string, number][]; children: React.ReactNode; solid?: number[] }) => (
  <Plot x={x} y={756} w={w} h={189}>
    <rect x={x} y={756} width={w} height={189} fill="#c9c9c9" />
    <rect x={x} y={756} width={571} height={189} fill="#ffffff" />
    {gray.map(([a, b]) => (
      <rect key={a} x={a} y={756} width={b - a} height={189} fill="#e8e8e8" />
    ))}
    <Grid ys={ys} xs={xs} x1={x} x2={x + 568} y1={756} y2={945} solid={solid} />
    {children}
    <line x1={x + 571} x2={x + 571} y1={756} y2={945} stroke="#000000" />
    {labels.map(([t, y]) => (
      <Lbl key={t} x={x + 574} y={y} t={t} />
    ))}
  </Plot>
);

const SmallVolume = ({ x, w, xs, ys, labels, ticks, axisX, bars }: { x: number; w: number; xs: number[]; ys: number[]; labels: [string, number][]; ticks: [string, number][]; axisX: number; bars: React.ReactNode }) => (
  <Plot x={x} y={973} w={w} h={80}>
    <rect x={x} y={973} width={w} height={80} fill="#c9c9c9" />
    <rect x={x} y={973} width={571} height={62} fill="#ffffff" />
    <Grid ys={ys} xs={xs} x1={x} x2={x + 568} y1={973} y2={1035} />
    {bars}
    <line x1={x} x2={x + 571} y1={1035} y2={1035} stroke="#000000" strokeWidth={1.5} />
    <line x1={x + 571} x2={x + 571} y1={973} y2={1035} stroke="#000000" />
    {labels.map(([t, y]) => (
      <Lbl key={t} x={x + 574} y={y} t={t} />
    ))}
    <rect x={x + 572} y={1036} width={40} height={10} fill="#c9c9c9" />
    <Vert x={axisX} y={1006} t="<millions>" />
    {ticks.map(([t, tx]) => (
      <Lbl key={t + tx} x={tx} y={1045} t={t} mid />
    ))}
  </Plot>
);

const SpyChart = () => {
  const xs = [57, 129, 202, 273, 346, 418, 491, 562];
  return (
    <div className="relative h-[189px] shrink-0">
      <SmallFrame x={0} w={637} gray={[[2, 93]]} xs={xs} ys={[802, 824, 846, 869, 914, 936]} solid={[780]} labels={[['211.2', 758], ['211', 780], ['210.8', 802], ['210.6', 824], ['210.4', 846], ['210.2', 869], ['210', 891], ['209.8', 914], ['209.6', 936]]}>
        <line x1={0} x2={571} y1={892} y2={892} stroke="#000000" strokeWidth={1.6} />
        <text x={8} y={811} fontSize={27} fontWeight="bold" fill="#cacaca" stroke="#acacac" strokeWidth={0.6}>SPDRS</text>
        <text x={4} y={773} fontSize={11} fill="#8a8a8a">2015 © TD Ameritrade IP Company, Inc.</text>
        {spyLine.slice(1).map((p, i) => seg(spyLine[i], p, p[1] < spyLine[i][1] ? '#2c9a2c' : '#e04040', 1.2, `s${i}`))}
        <Badge x={572} y={816} w={41} t="210.67" bg="#e81010" />
      </SmallFrame>
    </div>
  );
};

const SpyVolume = () => (
  <SmallVolume
    x={0}
    w={637}
    xs={[57, 129, 202, 273, 346, 418, 491, 562]}
    ys={[988, 1012]}
    labels={[['4', 988], ['2', 1012], ['0', 1036]]}
    ticks={[['9:00', 67], ['10:00', 142], ['11:00', 214], ['12:00', 286], ['13:00', 359], ['14:00', 432], ['15:00', 503], ['16:00', 574]]}
    axisX={622}
    bars={spyVol.map(([c, t], i) => (
      <line key={i} x1={40.8 + i * 6.01} x2={40.8 + i * 6.01} y1={1035} y2={960 + t / 3} stroke={tone(c)} strokeWidth={2} />
    ))}
  />
);

const Sbux5Chart = () => (
  <div className="relative h-[189px] shrink-0">
    <SmallFrame x={640} w={633} gray={[[642, 762], [1076, 1208]]} xs={[651, 694, 731, 758, 786, 834, 882, 931, 979, 1027, 1075, 1123, 1172]} ys={[791, 827, 864, 900, 937]} labels={[['99', 792], ['98.5', 829], ['98', 866], ['97.5', 902], ['97', 939]]}>
      <Siren cx={667} cy={793} r={17} />
      <line x1={694} x2={694} y1={756} y2={945} stroke="#555555" strokeDasharray="7 4" />
      <line x1={758} x2={758} y1={756} y2={945} stroke="#555555" strokeDasharray="7 4" />
      <Candles data={sbux5Candles} x0={645} step={4.03} w={3} fadeUntil={762} />
      <Badge x={1212} y={923} w={35} t="97.19" bg="#0a8a0a" />
    </SmallFrame>
    <Chips cls="left-[4px]" note="2015 © TDA" />
  </div>
);

const Sbux5Volume = () => (
  <SmallVolume
    x={640}
    w={633}
    xs={[651, 694, 731, 758, 786, 834, 882, 931, 979, 1027, 1075, 1123, 1172]}
    ys={[983, 1011]}
    labels={[['1', 983], ['0.5', 1011], ['0', 1036]]}
    ticks={[['18', 656], ['Пт', 700], ['8', 733], ['9', 761], ['10', 791], ['11', 839], ['12', 888], ['13', 935], ['14', 983], ['15', 1032], ['16', 1079], ['17', 1128], ['18', 1177]]}
    axisX={1260}
    bars={sbux5Candles.map((c, i) => {
      const h = i === 29 ? 62 : i === 30 ? 20 : i === 31 ? 12 : i === 71 ? 16 : i < 15 ? 1 : 1 + (i * 11) % 5;
      return <line key={i} x1={645 + i * 4.03} x2={645 + i * 4.03} y1={1035} y2={1035 - h} stroke={tone(c[0])} strokeWidth={1.4} />;
    })}
  />
);

const Sbux20Chart = () => (
  <div className="relative h-[189px] shrink-0">
    <Plot x={1276} y={756} w={636} h={189}>
      <rect x={1276} y={756} width={636} height={189} fill="#c9c9c9" />
      <rect x={1278} y={756} width={573} height={189} fill="#ffffff" />
      <Grid ys={[768, 790, 812, 834, 856, 878, 901, 923]} xs={[1336, 1440, 1544, 1650, 1752]} x1={1278} x2={1849} y1={756} y2={945} />
      {[1315, 1418, 1522, 1626, 1729].map((x) => (
        <line key={x} x1={x} x2={x} y1={756} y2={945} stroke="#444444" strokeDasharray="7 4" />
      ))}
      <Siren cx={1306} cy={793} r={17} />
      <Candles data={sbux20Candles} x0={1283} step={4} w={2.6} />
      <Bubble x={1475} y={784} w={46} t="Hi: 99.2" px={1484} py={806} below />
      <line x1={1851} x2={1851} y1={756} y2={945} stroke="#000000" />
      {([['101', 768], ['100', 790], ['99', 812], ['98', 834], ['97', 856], ['96', 878], ['95', 901], ['94', 923]] as [string, number][]).map(([t, y]) => (
        <Lbl key={t} x={1854} y={y} t={t} />
      ))}
      <Badge x={1854} y={852} w={33} t="97.19" bg="#0a8a0a" />
    </Plot>
    <Chips cls="left-[5px]" vol="6,638,614" note="2015 © TDA" />
  </div>
);

const Sbux20Volume = () => (
  <SmallVolume
    x={1276}
    w={636}
    xs={[1336, 1440, 1544, 1650, 1752]}
    ys={[985, 1011]}
    labels={[['2', 985], ['1', 1011], ['0', 1036]]}
    ticks={[['Ср', 1319], ['Чт', 1423], ['Пт', 1527], ['Пн', 1631], ['Вт', 1735], ['Ср', 1839]]}
    axisX={1903}
    bars={sbux20Candles.map((c, i) => {
      const h = i === 33 ? 60 : i === 59 ? 42 : i > 18 && i < 70 ? ((i * 7) % 5 === 0 ? 12 + (i * 17) % 14 : 2 + (i * 3) % 6) : 1 + (i * 3) % 3;
      return <line key={i} x1={1283 + i * 4} x2={1283 + i * 4} y1={1035} y2={1035 - h} stroke={tone(c[0])} strokeWidth={1.4} />;
    })}
  />
);

type PanelProps = {
  sym: string;
  tf: string;
  symW: string;
  gap?: React.ReactNode;
  leftW: string;
  price: string;
  priceC: string;
  ch: [string, string];
  chC: string;
  ml: string;
  w: string;
  cells: Cell[];
  vol: string;
  chart: React.ReactNode;
  volChart: React.ReactNode;
  scroll: { last: string; left: number; width: number };
  pl?: string;
};

const ButtonSet = ({ tf }: { tf: string }) => (
  <div className="flex shrink-0 items-center gap-[1px]">
    <ToolBtn n="share" label="Share" cls="w-[54px]" />
    <ToolBtn n="flask" cls="w-[18px]" />
    <ToolBtn n="wrench" cls="w-[18px]" />
    <TfBtn t={tf} cls="w-[34px]" />
    <ToolBtn n="style" label="Style" cls="w-[48px]" />
    <ToolBtn n="pencil" label="Drawings" cls="w-[71px]" />
    <ToolBtn n="flask" label="Studies" cls="w-[60px]" />
    <ToolBtn n="patterns" label="Patterns" cls="w-[65px]" />
  </div>
);

const SmallPanel = ({ sym, tf, symW, gap, leftW, price, priceC, ch, chC, ml, w, cells, vol, chart, volChart, scroll, pl }: PanelProps) => (
  <div className={`flex flex-col bg-[#c9c9c9] ${w}`}>
    <div className="flex h-[27px] shrink-0 items-center text-[11px]">
      <div className={`flex items-center gap-[2px] overflow-hidden whitespace-nowrap ${leftW} ${pl ?? ''}`}>
        <Dot />
        <SymbolBox s={sym} cls={symW} />
        {gap}
      </div>
      <ButtonSet tf={tf} />
      <span className={`ml-[6px] text-[15px] font-bold ${priceC}`}>{price}</span>
      <Change a={ch[0]} b={ch[1]} cls={chC} />
    </div>
    <InfoRow cells={cells} ml={ml} w="w-[572px]" tall />
    {chart}
    <Splitter w="w-[571px]" ml={ml} h="h-[8px]" />
    <VolRow v={vol} ml={ml} w="w-[572px]" />
    {volChart}
    <ScrollRow last={scroll.last} left={scroll.left} width={scroll.width} />
  </div>
);

const Tri = () => <span className="mt-[10px] ml-[3px] h-0 w-0 border-b-[5px] border-l-[5px] border-b-[#444] border-l-transparent" />;

const TitleBar = () => (
  <div className="flex h-[22px] items-stretch bg-linear-to-b from-[#ececec] to-[#b4b4b4] text-[11px] text-[#222]">
    <div className="mt-[3px] ml-[4px] h-[14px] w-[25px] bg-linear-to-b from-[#7ea82a] to-[#3e7a10] text-center text-[11px] leading-[14px] font-bold text-[#d8f080]">PM</div>
    <span className="ml-[10px] leading-[22px] text-[#0a7a0a]">Connected</span>
    <span className="ml-[12px] leading-[22px] text-[#7a6a00]">Delayed data</span>
    <Tri />
    <span className="ml-[6px] leading-[22px] whitespace-pre">Mar, 20  20:42:47</span>
    <Tri />
    <span className="ml-[7px] leading-[22px]">{'Account: <TOTAL> (ALL ACCOUNTS)'}</span>
    <Tri />
    <div className="ml-auto flex">
      <div className="flex w-[104px] items-center justify-center gap-[3px] border-x border-[#a8a8a8]">
        <svg width="14" height="16" viewBox="0 0 14 16"><path d="M7 1 V6 M2 3 L6 7 M1 10 L6 8 M4 15 L7 9 M11 14 L8 9 M13 8 L8 7.5 M12 3 L8 7" stroke="#555" strokeWidth="1.6" /></svg>
        Home Screen
      </div>
      <div className="flex w-[88px] items-center justify-center gap-[3px] border-r border-[#a8a8a8]">
        <svg width="14" height="11" viewBox="0 0 14 11"><rect x=".5" y=".5" width="13" height="10" fill="#ccc" stroke="#555" /><path d="M1 1 L7 6 L13 1 M1 10 L5 5 M13 10 L9 5" fill="none" stroke="#555" /></svg>
        Messages
      </div>
      <div className="flex w-[104px] items-center justify-center gap-[3px] border-r border-[#a8a8a8]">
        <svg width="15" height="15" viewBox="0 0 15 15"><circle cx="7.5" cy="7.5" r="6" fill="none" stroke="#666" strokeWidth="1.5" /><circle cx="7.5" cy="7.5" r="3.5" fill="#555" /></svg>
        Support/Chat
      </div>
      <div className="flex w-[67px] items-center justify-center gap-[3px] border-r border-[#a8a8a8]">
        <svg width="14" height="8" viewBox="0 0 14 8"><circle cx="3.5" cy="4" r="2.5" fill="none" stroke="#555" strokeWidth="1.5" /><path d="M6 4 H14" stroke="#555" strokeWidth="2" /></svg>
        Setup
      </div>
      <div className="ml-[14px] flex h-[16px] w-[83px] border border-[#9a9a9a]">
        <div className="flex w-[26px] items-center justify-center bg-[#eeeeee]"><span className="h-[2px] w-[9px] bg-[#333]" /></div>
        <div className="flex w-[26px] items-center justify-center border-x border-[#aaa] bg-[#dddddd]"><span className="h-[8px] w-[9px] border border-t-2 border-[#333]" /></div>
        <div className="flex flex-1 items-center justify-center bg-linear-to-b from-[#e8907a] to-[#c0442a] text-[12px] font-bold text-white">✕</div>
      </div>
    </div>
  </div>
);

const StatusBar = () => {
  const items = [['Option BP', '$200,000.00'], ['Stock BP', '$300,000.00'], ['Net Liq', '$200,000.00'], ['Forex BP', '$10,000.00'], ['Cash & Sweep Vehicle', '$200,000.00']];
  return (
    <div className="mt-[1px] flex h-[17px] items-center border-b border-[#a8a8a8] bg-[#3e5a7e] pl-[2px] text-[10.7px] text-[#dfe6ee]">
      {items.map(([a, b], i) => (
        <div key={a} className={`flex h-[14px] items-center gap-[9px] px-[4px] ${i < 4 ? 'border-r border-[#dfe6ee]' : ''}`}>
          <span className="text-[#c2cede]">{a}</span>
          <span>{b}</span>
        </div>
      ))}
      <svg className="ml-auto mr-[1px]" width="13" height="14" viewBox="0 0 13 14"><circle cx="6.5" cy="7" r="3.5" fill="none" stroke="#7ab0ec" strokeWidth="3.4" /><circle cx="6.5" cy="7" r="5.6" fill="none" stroke="#7ab0ec" strokeWidth="1.6" strokeDasharray="2 2" /></svg>
    </div>
  );
};

const TabBar = () => {
  const tabs = [['Monitor', 'w-[66px]'], ['Trade', 'w-[59px]'], ['Analyze', 'w-[69px]'], ['Scan', 'w-[52px]'], ['MarketWatch', 'w-[98px]'], ['Charts', 'w-[64px]'], ['Tools', 'w-[56px]'], ['Help', 'w-[48px]']];
  return (
    <div className="flex h-[22px] items-end bg-[#c9c9c9] text-[11.5px] font-bold">
      {tabs.map(([t, w]) => (
        <div key={t} className={`flex h-[19px] items-center justify-center border-t-2 border-r-2 border-[#5f7fa6] pt-[1px] [clip-path:polygon(6px_0,100%_0,100%_100%,0_100%,0_6px)] ${w} ${t === 'Charts' ? 'bg-[#3e5a7e] text-white' : 'bg-[#a9bfdc] text-[#3e5a7e]'}`}>
          {t}
        </div>
      ))}
      <div className="mb-[1px] ml-auto flex h-[18px] w-[97px] items-center justify-center gap-[6px] border border-[#0f7050] bg-[#1b8a5f] text-white">
        <svg width="15" height="15" viewBox="0 0 15 15"><path d="M2 14 L7 7 L4 6 L11 3 L12 10 L9.5 8 L6 14Z" fill="#8ce02a" /><circle cx="11" cy="2" r="1.6" fill="#ffffff" /></svg>
        Investools
      </div>
    </div>
  );
};

const SubNav = () => (
  <div className="flex h-[25px] items-center border-b border-[#a8a8a8] bg-[#3e5a7e] pt-[3px] text-[11px] text-[#e6ecf3]">
    <svg className="ml-[11px]" width="15" height="18" viewBox="0 0 15 18"><path d="M4 2 V16" stroke="#e04040" /><rect x="1" y="5" width="6" height="9" rx="1" fill="#d83030" /><path d="M11 1 V13" stroke="#50d050" /><rect x="8" y="3" width="6" height="8" rx="1" fill="#30c030" /></svg>
    <span className="ml-[3px]">Charts</span>
    <svg className="ml-[21px]" width="16" height="18" viewBox="0 0 16 18"><path d="M8 1 L15 17 H1Z" fill="#e8a030" stroke="#7a4a10" strokeWidth=".7" /><circle cx="8" cy="11" r="2.4" fill="#fff" /><circle cx="8" cy="11" r="1.1" fill="#234" /></svg>
    <span className="ml-[3px]">Prophet</span>
    <div className="ml-[16px] flex h-[19px] w-[95px] items-center gap-[3px] rounded-full bg-[#a9bfdc] pl-[9px] text-[#222]">
      <svg width="15" height="16" viewBox="0 0 15 16"><g fill="#dfe6ee" stroke="#5f7fa6"><rect x=".5" y=".5" width="6" height="6" /><rect x="8.5" y=".5" width="6" height="4" /><rect x=".5" y="8.5" width="6" height="7" /><rect x="8.5" y="6.5" width="6" height="9" /></g></svg>
      Flexible Grid
    </div>
    <svg className="ml-[10px]" width="15" height="18" viewBox="0 0 15 18"><rect width="15" height="18" fill="#2a3442" /><path d="M0 11 L5 6 L9 10 L15 5 V9 L9 14 L5 10 L0 15Z" fill="#e8b020" /><path d="M0 15 L5 10 L9 14 L15 9 V16 H0Z" fill="#3a7cc0" /></svg>
    <span className="ml-[4px]">Product Depth</span>
    <div className="mr-[1px] ml-auto flex gap-[5px]">
      <span className="flex h-[20px] w-[21px] items-center justify-center rounded-full bg-[#d9e2ef]"><span className="grid h-[12px] w-[12px] grid-cols-2 gap-[1px]"><i className="bg-[#3d6fb0]" /><i className="bg-[#3d6fb0]" /><i className="bg-[#3d6fb0]" /><i className="bg-[#3d6fb0]" /></span></span>
      <span className="flex h-[20px] w-[21px] flex-col items-center justify-center gap-[2px] rounded-full bg-[#d9e2ef]"><i className="h-[2px] w-[11px] bg-[#3d6fb0]" /><i className="h-[2px] w-[11px] bg-[#3d6fb0]" /><i className="h-[2px] w-[11px] bg-[#3d6fb0]" /></span>
    </div>
  </div>
);

const greenTitle = 'font-bold text-[#0a8a0a]';

export default function App() {
  return (
    <div className="flex h-[1073px] w-[1912px] flex-col overflow-hidden bg-[#c9c9c9] font-['Liberation_Sans',Arial,sans-serif]">
      <TitleBar />
      <div className="h-[1px] bg-[#2e9a00]" />
      <StatusBar />
      <TabBar />
      <SubNav />
      <div className="flex h-[621px] shrink-0">
        {/* big intraday chart */}
        <div className="flex w-[1478px] flex-col border-y-[3px] border-r-[4px] border-[#0a84ff]">
          <div className="flex h-[25px] shrink-0 items-center bg-linear-to-b from-[#dfebff] to-[#8ab6ff] text-[11px]">
            <div className="flex w-[1004px] items-center gap-[2px]">
              <Dot />
              <SymbolBox s="SBUX" cls="w-[113px]" />
              <RedBox />
              <span className="text-[#111]">STARBUCKS CORP COM</span>
            </div>
            <ButtonSet tf="1m" />
            <span className="ml-[6px] text-[15px] font-bold text-[#007a00]">97.09</span>
            <Change a="-.67" b="-0.69 %" cls="text-[#d00000]" />
          </div>
          <InfoRow
            ml="ml-[58px]"
            w="w-[1357px]"
            cells={[
              { t: 'SBUX Today 1m [NASDAQ]', c: greenTitle },
              { t: 'D: 20.03.15 15:42' },
              { t: 'O: 97.17' },
              { t: 'H: 97.19' },
              { t: 'L: 97.16' },
              { t: 'C: 97.19' },
              { t: 'R: 0.03' },
              { t: 'VWAP (-0.0, 0.0, DAY)', c: 'text-[#0000e0]' },
              { t: '97.94', c: 'text-[#0000e0]' },
              { t: '97.94', c: 'text-[#f08080]' },
              { t: '97.94', c: 'text-[#ffa500]' },
              { t: 'Comparison (LINE, SPY)', c: 'text-[#0a8a0a]' },
              { t: 'O: 210.72', c: 'text-[#0a8a0a]' },
              { t: 'H: 210.73', c: 'text-[#0a8a0a]' },
              { t: 'L: 210.67', c: 'text-[#0a8a0a]' },
              { t: 'C: 210.67', c: 'text-[#0a8a0a]' },
            ]}
          />
          <MainChart />
          <Splitter w="w-[1357px]" ml="ml-[58px]" h="h-[7px]" />
          <VolRow v="12325" ml="ml-[58px]" w="w-[1357px]" tall />
          <MainVolume />
          <ScrollRow last="T" left={391} width={332} />
        </div>
        <div className="w-[3px] bg-[repeating-linear-gradient(45deg,#6f8db0_0_1px,#dfe6ef_1px_2px)]" />
        {/* daily chart */}
        <div className="flex flex-1 flex-col border-t-[3px] border-[#c9c9c9]">
          <div className="flex h-[25px] shrink-0 items-center text-[11px]">
            <div className="flex w-[165px] items-center gap-[2px] pl-[2px]">
              <Dot />
              <SymbolBox s="SBUX" cls="w-[113px]" />
              <RedBox />
            </div>
            <div className="flex items-center gap-[1px]">
              <ToolBtn n="share" cls="w-[18px]" />
              <ToolBtn n="flask" cls="w-[18px]" />
              <ToolBtn n="wrench" cls="w-[18px]" />
              <TfBtn t="D" cls="w-[34px]" />
              <ToolBtn n="style" cls="w-[18px]" />
              <ToolBtn n="pencil" cls="w-[18px]" />
              <ToolBtn n="flask" cls="w-[18px]" />
              <ToolBtn n="patterns" cls="w-[18px]" />
            </div>
            <span className="ml-[8px] text-[15px] font-bold text-[#007a00]">97.09</span>
            <Change a="-.67" b="-0.69 %" cls="text-[#d00000]" />
          </div>
          <InfoRow
            ml="ml-[2px]"
            w="w-[369px]"
            cells={[
              { t: 'SBUX 1 y D [NASDAQ]', c: greenTitle },
              { t: 'D: 20.03.15' },
              { t: 'O: 98.97' },
              { t: 'H: 98.9' },
              { t: 'L: 97.01' },
              { t: '...' },
            ]}
          />
          <RightChart />
          <Splitter w="w-[368px]" ml="ml-[2px]" h="h-[7px]" />
          <VolRow v="6638564" ml="ml-[2px]" w="w-[369px]" />
          <RightVolume />
          <ScrollRow last="hand" left={202} width={73} />
        </div>
      </div>
      <div className="flex flex-1 items-stretch">
        <SmallPanel
          sym="SPY"
          tf="5m"
          symW="w-[113px]"
          leftW="w-[148px]"
          gap={
            <span className="flex items-center text-[#333]">
              <svg width="14" height="16" viewBox="0 0 14 16"><rect x="1" y="1" width="7" height="7" fill="#e00000" stroke="#000" /><rect x="4" y="5" width="7" height="7" fill="#f0e000" stroke="#000" /><rect x="7" y="9" width="6" height="6" fill="#0000d0" stroke="#000" /></svg>
              ..
            </span>
          }
          price="210.46"
          priceC="text-[#d00000]"
          ch={['+1.90', '+0.91 %']}
          chC="pr-[10px] text-[#0a8a0a]"
          ml="ml-0"
          w="w-[637px]"
          cells={[
            { t: 'SPY 10 d 5m', c: greenTitle },
            { t: 'D: 20.03.15 15:40' },
            { t: 'O: 210.71' },
            { t: 'H: 210.74' },
            { t: 'L: 210.67' },
            { t: 'C: 210.67' },
            { t: 'R: 0.07' },
          ]}
          vol="871624"
          chart={<SpyChart />}
          volChart={<SpyVolume />}
          scroll={{ last: 'hand', left: 473, width: 23 }}
        />
        <div className="w-[3px] bg-[repeating-linear-gradient(45deg,#6f8db0_0_1px,#dfe6ef_1px_2px)]" />
        <SmallPanel
          sym="SBUX"
          tf="5m"
          symW="w-[113px]"
          leftW="w-[159px]"
          gap={
            <>
              <RedBox />
              <span className="text-[#333]">S...</span>
            </>
          }
          price="97.09"
          priceC="text-[#007a00]"
          ch={['-.67', '-0.69 %']}
          chC="pr-[10px] text-[#d00000]"
          ml="ml-0"
          w="w-[633px]"
          cells={[
            { t: 'SBUX 5 d 5m [NASDAQ]', c: greenTitle },
            { t: 'D: 20.03.15 15:40' },
            { t: 'O: 97.13' },
            { t: 'H: 97.19' },
            { t: 'L: 97.12' },
            { t: 'C: 97.19' },
            { t: 'R: 0.07' },
          ]}
          vol="45714"
          chart={<Sbux5Chart />}
          volChart={<Sbux5Volume />}
          scroll={{ last: 'hand', left: 389, width: 82 }}
        />
        <div className="w-[3px] bg-[repeating-linear-gradient(45deg,#6f8db0_0_1px,#dfe6ef_1px_2px)]" />
        <SmallPanel
          sym="SBUX"
          tf="15m"
          symW="w-[116px]"
          leftW="w-[164px]"
          pl="pl-[3px]"
          gap={
            <>
              <RedBox />
              <span className="text-[#333]">S...</span>
            </>
          }
          price="97.09"
          priceC="text-[#007a00]"
          ch={['-.67', '-0.69 %']}
          chC="text-[#d00000]"
          ml="ml-[2px]"
          w="w-[636px]"
          cells={[
            { t: 'SBUX 20 d 15m [NASDAQ]', c: greenTitle },
            { t: 'D: 20.03.15 15:30' },
            { t: 'O: 97.12' },
            { t: 'H: 97.19' },
            { t: 'L: 97.09' },
            { t: 'C: 97.19' },
            { t: 'R: 0.1' },
          ]}
          vol="221635"
          chart={<Sbux20Chart />}
          volChart={<Sbux20Volume />}
          scroll={{ last: 'hand', left: 393, width: 83 }}
        />
      </div>
    </div>
  );
}
